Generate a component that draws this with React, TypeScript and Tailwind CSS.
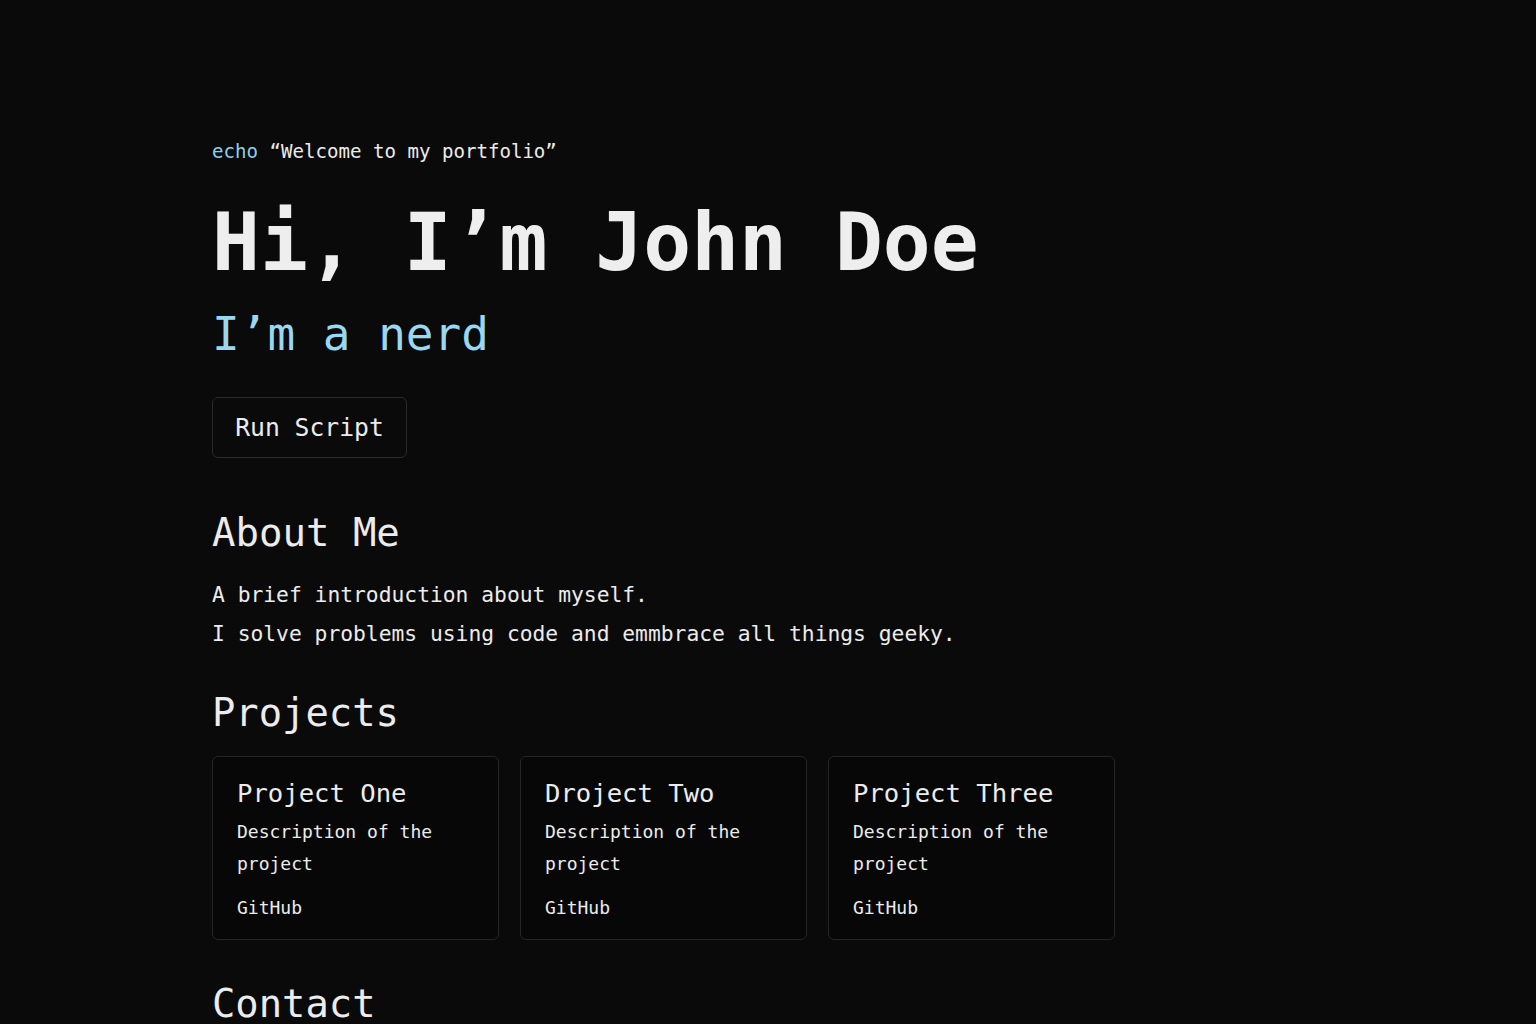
const mono = "font-['DejaVu_Sans_Mono',monospace]";

const projects = [
  { title: "Project One", description: "Description of the project" },
  { title: "Droject Two", description: "Description of the project" },
  { title: "Project Three", description: "Description of the project" },
];

export default function App() {
  return (
    <div className={`min-h-screen bg-[#0a0a0a] text-[#ececec] ${mono}`}>
      <div className="pl-[212px] pt-[138px] pb-10">
        <p className="text-[19.1px] leading-[28px]">
          <span className="text-[#8cd0ec]">echo</span> “Welcome to my portfolio”
        </p>

        <h1 className="mt-[29px] text-[79.6px] leading-[96px] font-bold text-[#eeeeee]">
          Hi, I’m John Doe
        </h1>
        <p className="mt-[15px] text-[46px] leading-[56px] text-[#9ad8f2]">I’m a nerd</p>

        <button className="mt-[35px] h-[61px] w-[195px] rounded-md border border-[#2a2a2a] bg-[#0a0a0a] text-[24.7px] text-[#ececec]">
          Run Script
        </button>

        <section className="mt-[51px]">
          <h2 className="text-[39px] leading-[48px]">About Me</h2>
          <div className="mt-[18px] text-[21.3px] leading-[39px]">
            <p>A brief introduction about myself.</p>
            <p>I solve problems using code and emmbrace all things geeky.</p>
          </div>
        </section>

        <section className="mt-[36px]">
          <h2 className="text-[38.8px] leading-[48px]">Projects</h2>
          <div className="mt-[19px] flex gap-[21px]">
            {projects.map((p) => (
              <div
                key={p.title}
                className="w-[287px] h-[184px] rounded-md border border-[#262626] bg-[#070707] pl-[24px] pr-6 pt-[20px]"
              >
                <h3 className="text-[25.6px] leading-[32px]">{p.title}</h3>
                <p className="mt-[7px] text-[18px] leading-[32px] w-[210px]">{p.description}</p>
                <p className="mt-[14px] text-[18px] leading-[28px]">GitHub</p>
              </div>
            ))}
          </div>
        </section>

        <section className="mt-[40px]">
          <h2 className="text-[38.8px] leading-[48px]">Contact</h2>
        </section>
      </div>
    </div>
  );
}
